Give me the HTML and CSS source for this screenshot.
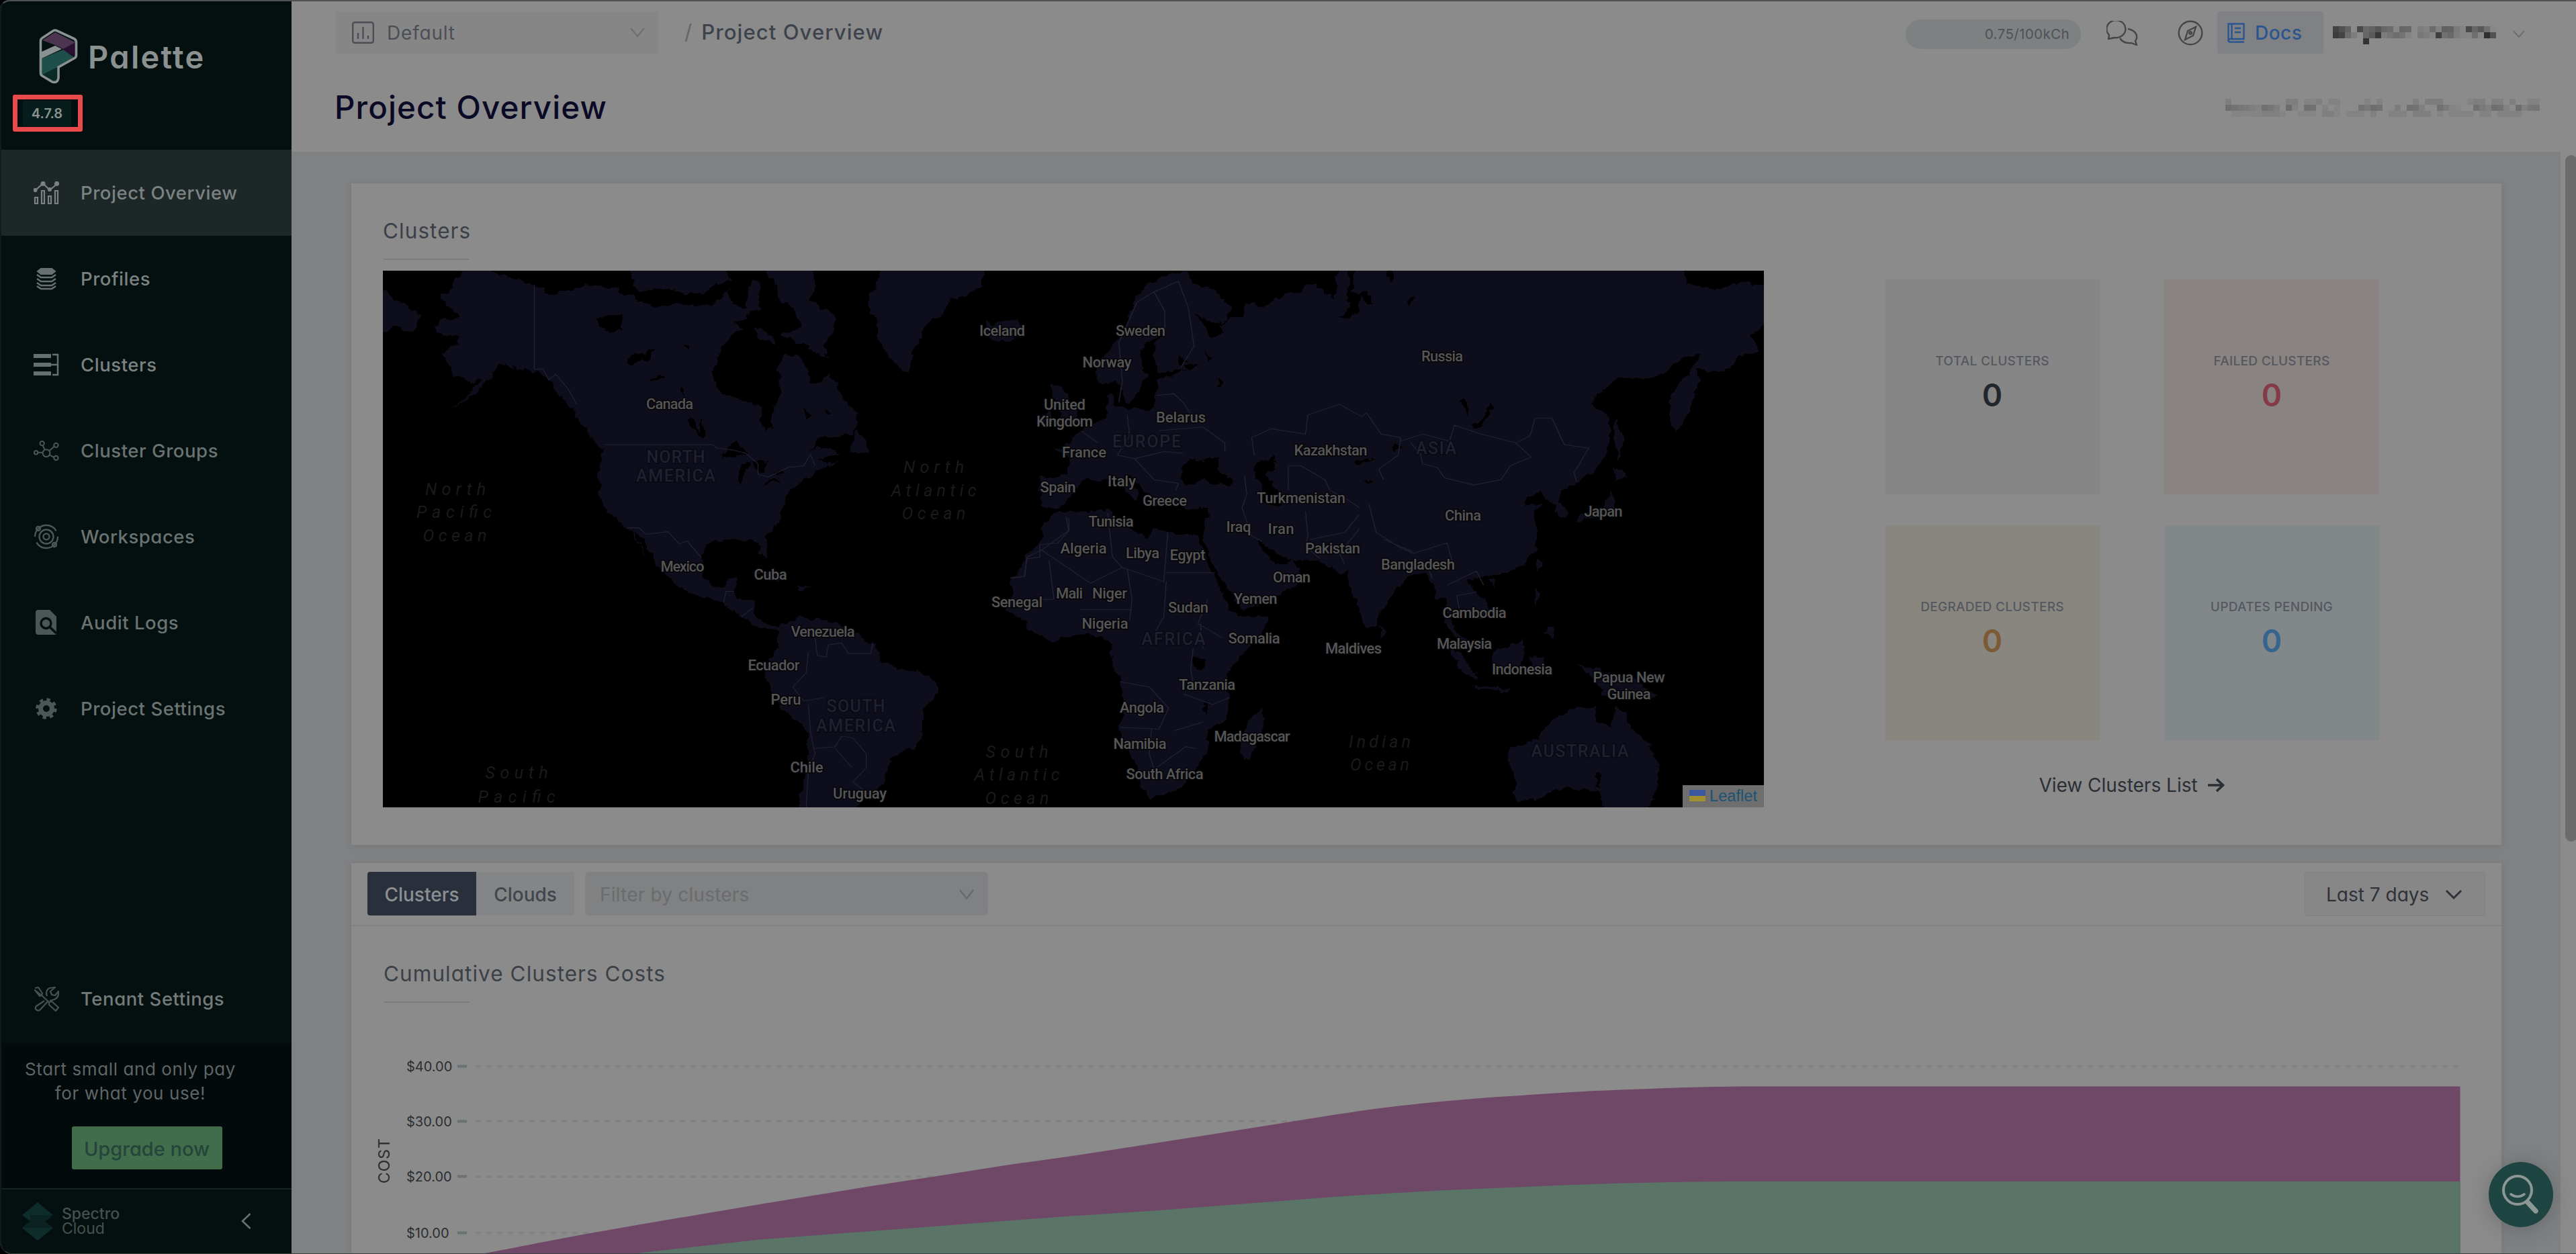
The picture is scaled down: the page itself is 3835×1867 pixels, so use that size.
FILE: index.html
```html
<!DOCTYPE html>
<html lang="en">
<head>
<meta charset="utf-8">
<title>Project Overview</title>
<link rel="stylesheet" href="styles.css">
</head>
<body>
<div class="app">
  <aside class="sidebar">
    <div class="brand">
      <svg class="brand-mark" width="58" height="82" viewBox="0 0 58 82">
        <path d="M4 18 24 5 54 19V42L28 58V72Q28 80 20 77L4 68Z" fill="#04110f"/>
        <path d="M5 17 24 5 54 20V24L38 31 24 24Z" fill="#4b3550"/>
        <path d="M54 20V41L34 31Z" fill="#2b0f31"/>
        <path d="M4 34 24 25 34 30 4 44Z" fill="#8b9190"/>
        <path d="M4 44 36 31 52 42 28 57 4 69Z" fill="#1f4f4b"/>
        <path d="M4 69 27 58V74Q26 79 18 76Z" fill="#0b2b29"/>
        <path d="M2.500 18Q2.500 15 5 13.500L21 3Q24 1 27 3L52 14.500Q55.500 16 55.500 20V39Q55.500 42 53 43.500L29 57V73Q28 81 20 79L5 70Q2.500 68.500 2.500 66Z" fill="none" stroke="#8b9190" stroke-width="3.600"/>
      </svg>
      <span class="brand-name">Palette</span>
    </div>
    <div class="version"><span>4.7.8</span></div>
    <nav class="nav">
      <a class="nav-item active">
        <svg width="38" height="34" viewBox="0 0 38 34" fill="none" stroke="currentColor" stroke-width="2.200"><path d="M2 14 14 3 24 13 36 3"/><circle cx="2.500" cy="13" r="2" fill="currentColor"/><circle cx="14" cy="3.500" r="2.500" fill="currentColor"/><circle cx="24" cy="12" r="2" fill="currentColor"/><circle cx="34.500" cy="3.500" r="2.500" fill="currentColor"/><path d="M2 24h4v9H2zM12 14h4v19h-4zM22 22h4v11h-4zM32 14h4v19h-4z"/></svg>
        <span>Project Overview</span></a>
      <a class="nav-item">
        <svg width="38" height="34" viewBox="0 0 38 34" fill="none" stroke="currentColor" stroke-width="2.600"><path d="M11 2h16l5 4-5 4H11L6 6z" fill="currentColor" stroke-width="2"/><path d="M5 11l6 4h16l6-4M5 17l6 4h16l6-4M5 23l6 4h16l6-4M5 28l6 4h16l6-4"/></svg>
        <span>Profiles</span></a>
      <a class="nav-item">
        <svg width="38" height="34" viewBox="0 0 38 34" fill="none" stroke="currentColor"><path d="M0 4h26M0 17h26M0 30h26" stroke-width="6"/><path d="M28 2h8v30h-8M26 17h9" stroke-width="2.500"/></svg>
        <span>Clusters</span></a>
      <a class="nav-item dim">
        <svg width="42" height="34" viewBox="0 0 42 34" fill="none" stroke="currentColor" stroke-width="2.200"><circle cx="21" cy="21" r="6"/><circle cx="14" cy="5" r="3.500"/><circle cx="37" cy="8" r="3.500"/><circle cx="4" cy="20" r="3"/><circle cx="37" cy="29" r="3.500"/><path d="m15 8 3 7M34 10l-8 7M7 20h8M26 24l8 4"/></svg>
        <span>Cluster Groups</span></a>
      <a class="nav-item dim">
        <svg width="38" height="38" viewBox="0 0 38 38" fill="none" stroke="currentColor" stroke-width="2.400"><circle cx="19" cy="19" r="17" stroke-dasharray="44 9"/><circle cx="19" cy="19" r="10.500"/><circle cx="19" cy="19" r="4.500"/><circle cx="7" cy="7" r="3"/><circle cx="31" cy="31" r="3"/></svg>
        <span>Workspaces</span></a>
      <a class="nav-item dim">
        <svg width="32" height="37" viewBox="0 0 32 37"><path d="M4 0h17l10 10v26Q30 37 28 37H4q-4 0-4-4V4q0-4 4-4z" fill="currentColor"/><circle cx="15.500" cy="20" r="7.500" fill="none" stroke="#04100f" stroke-width="3.400"/><path d="m21 25.500 10 9.500" stroke="#04100f" stroke-width="3.600"/></svg>
        <span>Audit Logs</span></a>
      <a class="nav-item dim">
        <svg width="32" height="32" viewBox="0 0 32 32" fill="none" stroke="currentColor"><circle cx="16" cy="16" r="8.500" stroke-width="7"/><circle cx="16" cy="16" r="13.500" stroke-width="4.500" stroke-dasharray="5.300 5.300"/></svg>
        <span>Project Settings</span></a>
    </nav>
    <a class="nav-item tenant">
      <svg width="38" height="38" viewBox="0 0 38 38" fill="none" stroke="currentColor" stroke-width="2.200" stroke-linejoin="round"><path d="M2 3l5-1 6 9-1 3 12 11M12 14l-3 1-7-9zM23 24l4-1 10 9-4 5-10-9zM16 22 4 30q-3 4 1 6 3 2 6-2l10-11M20 15q-3-9 4-12l8-1-7 6 2 5 5 1 5-6q1 9-6 12l-7 2"/></svg>
      <span>Tenant Settings</span></a>
    <div class="promo">
      <p>Start small and only pay<br>for what you use!</p>
      <button class="upgrade">Upgrade now</button>
    </div>
    <div class="side-foot">
      <svg width="46" height="57" viewBox="0 0 46 57"><path d="M23 0 46 19 34 29 46 38 23 57 0 38 12 28 0 19z" fill="#0e2d2a"/><path d="M12 19H46L34 29 46 38H0L12 28z" fill="#0a2321"/></svg>
      <div class="foot-name">Spectro<br><span>Cloud</span></div>
      <svg class="collapse" width="15" height="24" viewBox="0 0 15 24" fill="none" stroke="#687170" stroke-width="2.600"><path d="M13.500 1 2 12l11.500 11"/></svg>
    </div>
  </aside>

  <main class="main">
    <header class="header">
      <div class="topbar">
        <div class="project-select">
          <svg width="33" height="33" viewBox="0 0 33 33" fill="none" stroke="currentColor" stroke-width="2.400"><rect x="1.200" y="1.200" width="30.600" height="30.600" rx="3"/><path d="M9 17v9M16.500 8v18M24 21v5"/></svg>
          <span>Default</span>
          <svg width="22" height="15" viewBox="0 0 22 15" fill="none" stroke="#6c6d6e" stroke-width="2"><path d="m1 1 10 12L21 1"/></svg>
        </div>
        <div class="crumb"><i>/</i><b>Project Overview</b></div>
        <div class="usage">0.75/100kCh</div>
        <svg class="chat" width="48" height="38" viewBox="0 0 48 38" fill="none" stroke="#44464a" stroke-width="2.400" stroke-linejoin="round"><path d="M3 27l1-6A14 13 0 1 1 12 25z"/><path d="M32 12q14 3 13 14l-2 4 2 6-8-3q-12 1-17-7"/></svg>
        <svg class="compass" width="38" height="38" viewBox="0 0 38 38" fill="none" stroke="#44464a" stroke-width="2.400"><circle cx="19" cy="19" r="17.300"/><path d="m27 10-4 13-12 6 4-13z"/><circle cx="19" cy="19" r="1.800"/></svg>
        <div class="docs">
          <svg width="26" height="30" viewBox="0 0 26 30" fill="none" stroke="currentColor" stroke-width="2.400"><path d="M1.500 26V1.500h23V24H4q-2.500 1-2.500 2.500T4 28.500h21M6.500 2v21M11 8h9M11 14h9"/></svg>
          <span>Docs</span>
        </div>
        <div class="mosaic user" data-cells="user"></div>
        <svg class="user-caret" width="18" height="12" viewBox="0 0 18 12" fill="none" stroke="#6c6d6e" stroke-width="2"><path d="m1 1 8 9 8-9"/></svg>
      </div>
      <div class="titlebar">
        <h1>Project Overview</h1>
        <div class="mosaic tenant-name" data-cells="tenant"></div>
      </div>
    </header>

    <div class="content">
      <section class="card overview">
        <div class="map-col">
          <h2>Clusters</h2>
          <svg class="map" width="2056" height="799" viewBox="0 0 2056 799">
            <defs>
              <filter id="coast" x="0" y="0" width="100%" height="100%" filterUnits="userSpaceOnUse"><feTurbulence type="fractalNoise" baseFrequency=".07" numOctaves="3" seed="4"/><feDisplacementMap in="SourceGraphic" scale="13" xChannelSelector="R" yChannelSelector="G"/></filter>
            </defs>
            <rect width="2056" height="799" fill="#000"/>
            <g filter="url(#coast)">
              <g class="land" transform="translate(-10 -13) scale(.6633 .52296)">
                <path d="M205 0 180 50 165 85 145 100 165 130 190 155 165 165 140 165 132 185 150 205 185 210 185 230 160 245 148 265 165 295 180 325 215 340 235 335 205 380 165 415 200 395 240 355 255 330 275 290 295 295 330 305 360 310 385 335 405 365 425 395 445 430 465 470 485 500 510 535 505 570 500 620 500 660 515 700 540 735 565 760 590 800 610 845 635 870 660 900 665 915 700 940 740 955 780 975 815 1005 835 1020 855 1040 880 1050 895 1045 905 1060 900 1100 880 1130 872 1180 890 1220 910 1270 940 1300 965 1330 970 1400 960 1480 945 1570 1065 1570 1090 1530 1120 1510 1145 1470 1150 1420 1175 1395 1215 1380 1225 1330 1230 1275 1262 1225 1262 1190 1235 1170 1190 1160 1135 1140 1120 1090 1100 1075 1060 1050 1030 1025 1000 1020 960 1015 950 1005 930 1020 905 1040 880 1035 855 1015 845 990 850 965 810 960 805 930 815 900 790 900 780 925 755 925 735 895 730 845 735 810 760 795 800 790 850 795 870 840 878 845 875 780 905 740 910 700 930 650 960 620 985 600 1040 570 1010 575 1000 560 1040 540 990 525 970 540 1000 500 1070 490 1085 460 1080 430 1050 400 1035 350 1015 320 1000 345 975 340 965 300 945 265 915 260 900 300 910 370 900 405 890 410 888 470 870 480 862 450 862 410 830 395 775 375 755 340 755 300 770 265 790 225 820 190 800 170 830 160 860 130 860 60 840 50 830 130 800 120 790 80 750 130 690 120 640 125 600 115 570 100 530 70 470 65 440 80 400 90 355 70 310 45 260 30 250 0Z"/>
                <path d="M870 10H980L985 80 965 110 1000 130 1035 160 1025 200 1005 240 1010 275 975 245 940 225 910 210 900 180 950 190 945 140 900 100 890 60ZM560 10H740L765 50 740 90 690 85 640 75 590 85ZM745 10h40l10 40-30 20zM850 190 890 190 895 230 860 225ZM1130 10H1370L1360 65 1320 100 1285 110 1275 150 1240 175 1210 240 1195 310 1170 305 1150 270 1125 210 1120 160 1105 130 1108 90 1125 75ZM1365 165 1385 180 1440 165 1448 195 1425 225 1395 230 1370 205ZM1080 480 1060 540 1105 545 1100 510ZM5 80 60 120 100 155 80 205 40 180 5 215ZM943 918 978 925 960 935ZM840 880 890 885 925 908 900 908Z"/>
                <g class="water"><path d="M495 160 555 145 550 190 515 200ZM565 290 575 260 600 262 630 245 610 280 590 285 575 295ZM612 340 630 320 655 330ZM690 235 703 235 700 250ZM685 355 693 355 685 390ZM700 440 710 450 722 490 730 440 738 490 730 502 705 475ZM775 558 805 505 835 545ZM820 575 835 570 822 635 812 620ZM840 565 880 570 870 600 850 595ZM855 638 900 615 905 622ZM890 600 915 597 905 610ZM575 765 600 790 632 870 620 868 592 800ZM960 418 980 440 965 440ZM1005 425 1020 435 1008 438ZM870 30 900 60 910 120 950 190 900 215 865 195 865 100Z"/></g>
              </g>
              <g class="land" transform="translate(930 -13) scale(.72704 .52296)">
                <path d="M340 35 370 30 375 60 420 75 455 130 450 165 420 170 385 150 405 180 415 215 440 205 435 175 480 150 485 115 520 125 560 95 600 90 610 60 645 75 670 110 675 0 1380 0 1390 60 1460 80 1500 55 1570 75 1548 180 1520 205 1540 250 1500 270 1470 310 1410 305 1415 340 1400 420 1365 480 1355 430 1360 370 1395 320 1420 260 1385 270 1350 315 1310 330 1250 330 1215 370 1195 410 1225 430 1235 480 1230 540 1200 600 1165 625 1135 650 1125 680 1145 700 1145 730 1125 725 1120 690 1105 680 1100 655 1060 670 1060 690 1095 690 1075 715 1085 760 1085 820 1060 860 1025 885 985 890 965 900 940 905 950 930 980 960 985 990 970 1020 955 1020 935 990 910 990 910 1030 935 1080 950 1100 920 1080 900 1040 895 960 880 960 870 920 855 880 820 895 800 930 765 985 755 1040 735 1040 715 980 700 920 700 880 680 890 665 870 640 850 590 850 560 835 530 810 510 790 525 830 545 860 570 860 580 840 600 890 595 920 550 950 500 985 478 990 465 960 440 910 415 840 405 800 405 760 410 700 370 705 340 690 300 690 290 665 270 630 240 600 245 620 270 660 265 680 240 650 215 615 190 620 150 620 135 660 110 700 75 700 65 690 68 610 125 610 128 560 100 535 130 510 150 480 190 450 205 430 205 380 215 370 215 410 235 415 290 425 305 395 305 340 360 310 380 305 345 310 310 315 300 290 300 240 325 190 310 215 270 250 275 300 290 320 265 370 250 405 238 400 230 340 205 350 185 340 180 290 215 240 240 200 250 150 265 95 300 50Z"/>
                <path d="M95 715 210 705 220 740 255 760 285 785 300 760 390 780 405 840 430 920 455 980 475 1010 535 1010 520 1060 480 1120 445 1180 455 1260 450 1300 410 1335 410 1400 385 1440 350 1500 290 1530 275 1500 260 1430 230 1340 240 1240 225 1170 210 1130 215 1090 190 1065 150 1060 80 1080 45 1040 10 1000 0 985 10 950 10 900 40 830 65 800 70 760Z"/>
                <path d="M520 1270 528 1300 505 1380 500 1415 480 1415 478 1370 485 1330ZM90 350 110 350 130 400 150 450 110 470 95 470 110 430 95 400ZM65 440 90 430 90 455 65 460ZM760 1030 775 1060 765 1070ZM895 1080 925 1115 960 1170 960 1195 930 1165ZM960 1205 1030 1220 1025 1226 960 1214ZM990 1110 1030 1100 1050 1065 1060 1110 1045 1160 1010 1160 990 1140ZM1080 930 1092 940 1085 985ZM1095 1050 1120 1040 1118 1070ZM1165 1145 1220 1165 1290 1190 1330 1240 1290 1240 1220 1235 1200 1180ZM1240 580 1270 605 1245 625ZM1235 650 1245 700 1200 728 1165 740 1175 720 1220 700ZM1245 440 1260 500 1252 570 1243 500ZM1030 1385 1085 1355 1115 1300 1140 1290 1165 1265 1205 1270 1200 1300 1235 1330 1245 1260 1265 1290 1275 1330 1310 1365 1335 1430 1330 1500 1310 1565 1225 1565 1210 1510 1180 1500 1130 1500 1080 1530 1040 1535 1040 1480 1025 1420ZM1070 1120 1100 1125 1090 1180 1072 1170ZM1080 840 1092 850 1085 880ZM985 905 1000 905 995 925Z"/>
                <g class="water"><path d="M370 560 400 570 435 555 430 590 465 625 450 640 400 620 360 640 355 610ZM510 570 550 555 545 590 530 600 560 660 560 695 525 695 520 640 505 610ZM700 5H712L705 85 740 80 748 125 735 115 722 95 715 150 690 162 678 152 700 130ZM775 5 790 30 790 60 778 45ZM832 95 822 130 818 110ZM925 390 940 385 943 440ZM993 400 990 435 965 475 948 472 975 440ZM430 330 440 350 430 352ZM405 250 420 280 410 290ZM350 265 370 280 355 300ZM365 290 390 290 375 310ZM712 565 755 560 720 575ZM790 515 805 525 795 540ZM382 1130 405 1130 405 1160 385 1160ZM400 1250 408 1250 408 1290ZM730 622 750 625 735 630ZM1205 1450 1215 1450 1213 1500 1205 1490Z"/></g>
              </g>
            </g>
            <g class="borders" transform="translate(-10 -13) scale(.6633 .52296)"><path d="M355 65V305L375 305 387 335 403 320 430 360 450 405M512 520H755L765 530 800 535 830 545 857 575V605L880 612 925 585 960 580 975 548 985 580M563 757 590 757 605 775 655 768 680 802 698 795 730 842M780 970 785 938 803 938M820 1010 845 985M985 1070 990 1120 1010 1125 1015 1090 1045 1085 1060 1115 1110 1115 1115 1085M970 1110 965 1170 935 1210 960 1250 1005 1240M970 1260 975 1340 985 1400 970 1450 965 1555M985 1385 1030 1380 1045 1350 1070 1355 1100 1400 1100 1440 1070 1480 1115 1525M1030 1385 1068 1440M1555 730 1555 765 1530 800 1490 805 1490 840 1460 845 1455 895 1425 900"/></g>
            <g class="borders" transform="translate(930 -13) scale(.72704 .52296)"><path d="M228 400 235 340 228 230 265 115 300 85 350 55M300 85 322 140V195M350 55 370 130 382 240 355 300M305 380 340 375 360 400 378 440M310 480 400 470 445 515 445 540M245 435 250 495 225 550 260 560 320 540 360 545M150 480 185 515M260 560 300 620 350 630 345 650M505 550 500 500 540 475 610 490 615 435 680 405 725 440 735 430 765 490 805 500 800 550 760 590 770 620M805 510 850 490 905 510 915 465 970 490 1040 515 1072 555 1030 580 1010 620 955 635 895 615 880 585 850 575 845 545 825 515M1040 515 1070 495 1080 445 1115 445 1140 520 1190 530 1160 600 1165 625M575 580 600 580 650 620 660 650 700 680 720 700M575 580V650M485 610 490 660 480 700 500 780 520 795M610 710 615 780 610 810 640 845M620 790 690 770 720 720M690 860 680 830 720 760M740 690 755 770 800 810 830 830 900 800 910 850M770 790 830 825M860 870 870 900M900 920 960 880 975 920M925 990 920 950 960 940M120 725 125 765 70 820 40 840 35 895 5 900M85 850 95 960 10 965M70 820 170 915 235 870 215 840 205 715M235 870 320 910 328 770M325 885H425M325 910 320 1010 300 1060M245 875 255 960 250 1020M150 990 255 990M410 960 390 1030 440 1070M230 1195 290 1210 330 1270 310 1330 230 1325M380 1100 375 1160 380 1200M395 1030 400 1100M360 1230 420 1260 455 1240M295 1330 290 1400 300 1445 365 1380 385 1385M340 1335 400 1310"/></g>
            <g class="ocean">
              <text x="108" y="334" textLength="90">North</text><text x="106" y="368" textLength="112">Pacific</text><text x="107" y="403" textLength="95">Ocean</text>
              <text x="820" y="301" textLength="90">North</text><text x="820" y="336" textLength="127">Atlantic</text><text x="820" y="370" textLength="95">Ocean</text>
              <text x="199" y="756" textLength="93">South</text><text x="199" y="792" textLength="115">Pacific</text>
              <text x="944" y="725" textLength="93">South</text><text x="944" y="759" textLength="127">Atlantic</text><text x="944" y="794" textLength="95">Ocean</text>
              <text x="1484" y="710" textLength="92">Indian</text><text x="1484" y="744" textLength="88">Ocean</text>
            </g>
            <g class="continent">
              <text x="436" y="286" textLength="87">NORTH</text><text x="436" y="314" textLength="118">AMERICA</text>
              <text x="704" y="657" textLength="87">SOUTH</text><text x="704" y="686" textLength="118">AMERICA</text>
              <text x="1137" y="263" textLength="102">EUROPE</text><text x="1568" y="273" textLength="60">ASIA</text>
              <text x="1177" y="557" textLength="95">AFRICA</text><text x="1782" y="724" textLength="145">AUSTRALIA</text>
            </g>
            <g class="country">
              <text x="922" y="97" textLength="68">Iceland</text><text x="1128" y="97" textLength="74">Sweden</text><text x="1078" y="144" textLength="73">Norway</text><text x="1577" y="135" textLength="62">Russia</text><text x="427" y="206" textLength="70">Canada</text>
              <text x="1015" y="207" textLength="62">United</text><text x="1015" y="232" textLength="84">Kingdom</text><text x="1188" y="226" textLength="74">Belarus</text><text x="1044" y="278" textLength="66">France</text><text x="1411" y="275" textLength="109">Kazakhstan</text>
              <text x="1005" y="330" textLength="53">Spain</text><text x="1100" y="321" textLength="42">Italy</text><text x="1164" y="350" textLength="66">Greece</text><text x="1367" y="346" textLength="132">Turkmenistan</text><text x="1084" y="381" textLength="67">Tunisia</text>
              <text x="1274" y="389" textLength="37">Iraq</text><text x="1337" y="392" textLength="39">Iran</text><text x="1608" y="372" textLength="54">China</text><text x="1817" y="366" textLength="57">Japan</text><text x="1043" y="421" textLength="69">Algeria</text>
              <text x="1131" y="428" textLength="50">Libya</text><text x="1198" y="431" textLength="53">Egypt</text><text x="1414" y="421" textLength="82">Pakistan</text><text x="1541" y="445" textLength="110">Bangladesh</text><text x="1353" y="464" textLength="56">Oman</text>
              <text x="1022" y="488" textLength="40">Mali</text><text x="1082" y="488" textLength="52">Niger</text><text x="1299" y="496" textLength="65">Yemen</text><text x="944" y="501" textLength="76">Senegal</text><text x="1199" y="509" textLength="60">Sudan</text>
              <text x="1075" y="533" textLength="69">Nigeria</text><text x="1297" y="555" textLength="77">Somalia</text><text x="1625" y="517" textLength="95">Cambodia</text><text x="1445" y="570" textLength="84">Maldives</text><text x="1610" y="563" textLength="82">Malaysia</text>
              <text x="1227" y="624" textLength="84">Tanzania</text><text x="1696" y="601" textLength="90">Indonesia</text><text x="1855" y="613" textLength="107">Papua New</text><text x="1855" y="638" textLength="65">Guinea</text><text x="1130" y="658" textLength="66">Angola</text>
              <text x="1127" y="712" textLength="79">Namibia</text><text x="1294" y="701" textLength="113">Madagascar</text><text x="1164" y="757" textLength="115">South Africa</text><text x="446" y="448" textLength="65">Mexico</text><text x="577" y="460" textLength="49">Cuba</text>
              <text x="655" y="545" textLength="95">Venezuela</text><text x="582" y="595" textLength="77">Ecuador</text><text x="600" y="646" textLength="45">Peru</text><text x="631" y="747" textLength="49">Chile</text><text x="710" y="786" textLength="80">Uruguay</text>
            </g>
            <rect x="1935" y="766" width="121" height="33" fill="#6e6e6e"/>
            <rect x="1945" y="773" width="24" height="9" fill="#3b57a0"/><rect x="1945" y="782" width="24" height="8" fill="#a08f2c"/>
            <text class="leaflet" x="1975" y="790" textLength="71" lengthAdjust="spacingAndGlyphs">Leaflet</text>
          </svg>
        </div>
        <div class="stats-col">
          <div class="stats">
            <div class="stat total"><span>TOTAL CLUSTERS</span><b>0</b></div>
            <div class="stat failed"><span>FAILED CLUSTERS</span><b>0</b></div>
            <div class="stat degraded"><span>DEGRADED CLUSTERS</span><b>0</b></div>
            <div class="stat pending"><span>UPDATES PENDING</span><b>0</b></div>
          </div>
          <a class="view-list"><span>View Clusters List</span>
            <svg width="26" height="22" viewBox="0 0 26 22" fill="none" stroke="currentColor" stroke-width="3.600"><path d="M0 11h22M13 2l9.500 9L13 20"/></svg></a>
        </div>
      </section>

      <section class="card costs">
        <div class="toolbar">
          <div class="tabs"><span class="on">Clusters</span><span>Clouds</span></div>
          <div class="filter"><span>Filter by clusters</span>
            <svg width="22" height="16" viewBox="0 0 22 16" fill="none" stroke="#666869" stroke-width="2.200"><path d="m1 1 10 13L21 1"/></svg></div>
          <div class="range"><span>Last 7 days</span>
            <svg width="26" height="16" viewBox="0 0 26 16" fill="none" stroke="currentColor" stroke-width="3"><path d="m2 2 11 11L24 2"/></svg></div>
        </div>
        <h2>Cumulative Clusters Costs</h2>
        <svg class="chart" width="3200" height="375" viewBox="523 1492 3200 375">
          <g stroke="#7f8181" stroke-width="3" stroke-dasharray="8 8"><path d="M708 1587.500H3661M708 1669.500H3661M708 1751.500H3661M708 1835.500H3661"/></g>
          <g stroke="#6a7373" stroke-width="4"><path d="M681 1587.500h14M681 1669.500h14M681 1751.500h14M681 1835.500h14"/></g>
          <path fill="#6f4767" d="M719 1866.500C790 1853 830 1845 865 1838.500L956 1822.500 1131 1793 1293 1766.500 1405 1749.500 1500 1734.500 1600 1720.500 1691 1706.500C1770 1694 1850 1682 1928.600 1669 1990 1659 2040 1651 2097 1645 2150 1639 2210 1634 2265 1631 2330 1626 2390 1623 2456.600 1621 2520 1618.500 2560 1617.500 2610 1617.500H3662.500V1867Z"/>
          <path fill="#5a7468" d="M938 1867 1131 1845.500 1363 1828 1600 1810C1650 1807 1690 1804.500 1729.600 1801.700L1959 1784C2030 1779 2090 1775 2158 1771.700L2342 1764C2430 1761 2500 1759 2600 1759H3662.500V1867Z"/>
          <g class="axis"><text x="605" y="1595">$40.00</text><text x="605" y="1677">$30.00</text><text x="605" y="1759">$20.00</text><text x="605" y="1843">$10.00</text></g>
          <text class="axis-title" transform="translate(580 1762) rotate(-90)" textLength="67">COST</text>
        </svg>
      </section>
    </div>
  </main>

  <div class="scroll-thumb"></div>
  <div class="version-frame"></div>
  <button class="assist">
    <svg width="56" height="60" viewBox="0 0 56 60" fill="none" stroke="#8b9896" stroke-linecap="round"><circle cx="23" cy="23" r="21" stroke-width="4"/><path d="M13 29q10 7 20 0" stroke-width="3.500"/><path d="m38 41 12 13" stroke-width="7.500"/></svg>
  </button>
</div>
<script src="script.js"></script>
</body>
</html>
```
FILE: styles.css
```css
* { box-sizing: border-box; }
body {
  margin: 0;
  background: #000;
  font-family: Inter, "Open Sans", sans-serif;
  font-feature-settings: "cv11";
}
h1, h2, p { margin: 0; font-weight: 400; }
button { font: inherit; border: 0; padding: 0; }

.app {
  position: relative;
  display: flex;
  width: 3835px;
  height: 1867px;
  overflow: hidden;
  border-radius: 14px 0 0 18px;
  background: #8b8b8b;
}
.app::after {
  content: "";
  position: absolute;
  inset: 0;
  border-top: 2px solid #505151;
  border-bottom: 1px solid #3c4240;
  border-left: 2px solid #101c1b;
  border-radius: inherit;
  pointer-events: none;
}

/* Sidebar */
.sidebar {
  display: flex;
  flex-direction: column;
  flex: none;
  width: 434px;
  background: #04100f;
  color: #7b8281;
}
.brand {
  display: flex;
  align-items: center;
  gap: 15px;
  padding: 43px 0 0 58px;
}
.brand-name {
  font-size: 47px;
  font-weight: 600;
  letter-spacing: 2.3px;
  color: #8b9190;
}
.version {
  display: flex;
  margin: 25px 0 0 34px;
  height: 38px;
}
.version span {
  display: flex;
  align-items: center;
  justify-content: center;
  width: 72px;
  padding-bottom: 1px;
  background: #071d1c;
  font-size: 20px;
  font-weight: 600;
  color: #8b9190;
}
.nav { margin-top: 35px; }
.nav-item {
  display: flex;
  align-items: center;
  height: 128px;
  padding: 0 0 1px 50px;
  font-size: 27.5px;
  font-weight: 500;
  letter-spacing: .55px;
}
.nav-item svg { flex: none; width: 38px; margin-right: 32px; color: #68706f; }
.nav-item.active { background: #1e2727; }
.nav-item.active svg { color: #7b8281; }
.nav-item.dim, .nav-item.dim svg { color: #6b7372; }
.nav-item.dim svg { color: #4c5655; }
.tenant { margin-top: auto; padding-bottom: 5px; color: #747b7a; }
.tenant svg { color: #47514f; }
.promo {
  display: flex;
  flex-direction: column;
  align-items: center;
  height: 216px;
  padding: 21px 0 0;
  background: #020a0b;
  color: #5f6667;
  font-size: 26px;
  font-weight: 500;
  line-height: 36px;
  letter-spacing: .6px;
  text-align: center;
}
.promo p { margin-left: -46px; }
.upgrade {
  width: 224px;
  height: 64px;
  margin: 31px 0 0 3px;
  border-radius: 3px;
  background: #416d4b;
  color: #25453b;
  font-size: 29px;
  letter-spacing: 0;
  line-height: 68px;
}
.side-foot {
  display: flex;
  align-items: center;
  height: 98px;
  padding: 0 60px 2px 33px;
  border-top: 2px solid #16201f;
}
.foot-name {
  margin-left: 13px;
  font-size: 23px;
  line-height: 22px;
  font-weight: 500;
  color: #455150;
}
.foot-name span { font-weight: 400; }
.collapse { margin-left: auto; }

/* Header */
.main { width: 3378px; flex: none; display: flex; flex-direction: column; }
.header { height: 226px; padding: 17px 0 0 66px; }
.topbar { display: flex; align-items: flex-start; height: 63px; }
.project-select {
  display: flex;
  align-items: center;
  width: 480px;
  height: 63px;
  padding: 0 20px 0 24px;
  background: #868686;
  color: #4b4f55;
  font-size: 28px;
  letter-spacing: .8px;
}
.project-select span { margin: 0 auto 0 19px; }
.crumb {
  display: flex;
  align-items: center;
  gap: 14px;
  height: 61px;
  margin-left: 39px;
  font-size: 31px;
  color: #3d434b;
}
.crumb b { font-weight: 500; letter-spacing: 1.1px; }
.crumb i { font-style: normal; color: #666; }
.usage {
  width: 261px;
  height: 44px;
  margin: 12px 0 0 auto;
  padding-right: 17px;
  border-radius: 22px;
  background: #7d8182;
  color: #4d5257;
  font-size: 20.5px;
  letter-spacing: .4px;
  line-height: 43px;
  text-align: right;
}
.chat { margin: 14px 0 0 38px; }
.compass { margin: 13px 0 0 58px; }
.docs {
  display: flex;
  align-items: center;
  gap: 15px;
  width: 158px;
  height: 63px;
  margin-left: 21px;
  padding-left: 15px;
  border-radius: 4px;
  background: #7f8185;
  color: #2b5590;
  font-size: 28px;
  font-weight: 500;
  letter-spacing: .5px;
}
.user-caret { margin: 28px 53px 0 25px; }
.mosaic { display: grid; grid-auto-rows: 9px; }
.user { grid-template-columns: repeat(27, 9px); margin: 22px 0 0 14px; }
.tenant-name { grid-template-columns: repeat(52, 9px); margin: 19px 31px 0 auto; }
.titlebar { display: flex; align-items: flex-start; margin-top: 48px; }
h1 {
  font-size: 47.5px;
  font-weight: 550;
  line-height: 64px;
  letter-spacing: 1.1px;
  margin-left: -2px;
  color: #0a0a26;
}

/* Content */
.content {
  flex: 1;
  display: flex;
  flex-direction: column;
  gap: 27px;
  padding: 47px 88px 0 89px;
  background: #7f8183;
}
.card { background: #8b8b8b; box-shadow: 0 1px 8px rgba(50, 56, 60, .12); }
h2 {
  position: relative;
  font-size: 31.5px;
  line-height: 40px;
  letter-spacing: 1.05px;
  color: #3b4046;
}
h2::after {
  content: "";
  position: absolute;
  left: 1px;
  bottom: -23px;
  width: 127px;
  height: 2px;
  background: #777c7d;
}
.overview { display: flex; height: 985px; padding: 51px 0 0 47px; }
.map { display: block; margin-top: 39px; }
.land { fill: #10101b; }
.water { fill: #000; }
.borders { fill: none; stroke: #222233; stroke-width: 2; }
.map text { text-anchor: middle; font-family: Roboto, sans-serif; }
.map .country { fill: #565656; font-size: 22px; font-weight: 500; paint-order: stroke; stroke: #060609; stroke-width: 3; }
.map .continent { fill: #1f2030; font-size: 25px; font-weight: 500; paint-order: stroke; stroke: #090910; stroke-width: 3; }
.map .ocean { fill: #1a1a1b; font-size: 25px; font-style: italic; }
.map .leaflet { text-anchor: start; fill: #1b5472; font: 23px "Liberation Sans", sans-serif; }
.stats-col { display: flex; flex-direction: column; align-items: center; margin: 92px 0 0 180px; }
.stats { display: grid; grid-template-columns: 320px 320px; grid-auto-rows: 320px; gap: 46px 96px; }
.stat {
  display: flex;
  flex-direction: column;
  align-items: center;
  padding-top: 109px;
  color: #54585e;
}
.stat span { font-size: 19px; line-height: 26px; font-weight: 500; letter-spacing: .3px; }
.stat b { margin-top: 9px; font-size: 46px; line-height: 56px; font-weight: 600; }
.total { background: #868687; }
.total b { color: #22272c; }
.failed { background: #898381; }
.failed b { color: #843a48; }
.degraded { background: #88867f; }
.degraded b { color: #7c5a35; }
.pending { background: #82878a; }
.pending b { color: #34658f; }
.view-list {
  display: flex;
  align-items: center;
  gap: 15px;
  margin-top: 47px;
  color: #2a2f35;
  font-size: 28px;
  line-height: 40px;
}

/* Costs */
.costs { flex: 1; }
.toolbar {
  display: flex;
  height: 94px;
  padding: 13px 24px 0;
  border-bottom: 2px solid #808283;
  font-size: 28px;
}
.tabs { display: flex; height: 65px; line-height: 68px; border-radius: 4px; overflow: hidden; font-weight: 500; }
.tabs span { width: 146px; text-align: center; background: #838587; color: #40464e; }
.tabs .on { width: 162px; background: #2a303b; color: #8d9093; }
.filter {
  display: flex;
  align-items: center;
  justify-content: space-between;
  width: 600px;
  height: 65px;
  margin-left: 16px;
  padding: 2px 21px 0 22px;
  border-radius: 6px;
  background: #7f8182;
  color: #6a6c6e;
  letter-spacing: .2px;
}
.range {
  display: flex;
  align-items: center;
  justify-content: space-between;
  width: 269px;
  height: 66px;
  margin-left: auto;
  padding: 2px 33px 0 31px;
  border: 1px solid #818181;
  border-radius: 3px;
  background: #878787;
  color: #2f3237;
}
.costs h2 { margin: 51px 0 0 48px; }
.chart { display: block; margin-top: 22px; }
.axis { fill: #2b2e31; font-size: 20px; }
.axis-title { fill: #2b2e31; font-size: 23px; }

/* Overlays */
.scroll-thumb {
  position: absolute;
  left: 3819px;
  top: 231px;
  width: 18px;
  height: 1022px;
  border-radius: 9px;
  background: #6b6b6b;
}
.version-frame {
  position: absolute;
  left: 19px;
  top: 141px;
  width: 104px;
  height: 55px;
  border: 7px solid #e84a4b;
  border-radius: 3px;
}
.assist {
  position: absolute;
  left: 3705px;
  top: 1730px;
  width: 96px;
  height: 97px;
  display: flex;
  align-items: center;
  justify-content: center;
  border-radius: 50%;
  background: #1e4541;
  box-shadow: 0 4px 30px rgba(30, 35, 38, .25);
}
```
FILE: script.js
```js
// Grey level of each redaction cell, one hex pair per cell; ".." leaves a cell empty.
const cells = {
  user: [
    "435162..4a686256676c866669..7d826b8060637a844966587088",
    "3c446b7d..6559397d756e7484..777c854070687c83866e863052",
    "..........33..........................................."
  ],
  tenant: [
    "7e..................7e7e..83857f..8282........83..81..........80..7d7d7d........837e7e..8080..7e....8282",
    "6d72767a7e8270767e..6c82..7071..82..85......72786e72....7d..707280....707a8487....707a806e7282..6e80767476788082".slice(0, 104),
    "..858485848480808085....858585..7f8086..838383..80....828282..7f7f7f..83..83838383..8282..82828282......"
  ]
};

document.querySelectorAll(".mosaic").forEach((grid) => {
  for (const row of cells[grid.dataset.cells]) {
    for (const level of row.match(/../g)) {
      const cell = document.createElement("i");
      if (level !== "..") cell.style.background = "#" + level.repeat(3);
      grid.append(cell);
    }
  }
});
```
